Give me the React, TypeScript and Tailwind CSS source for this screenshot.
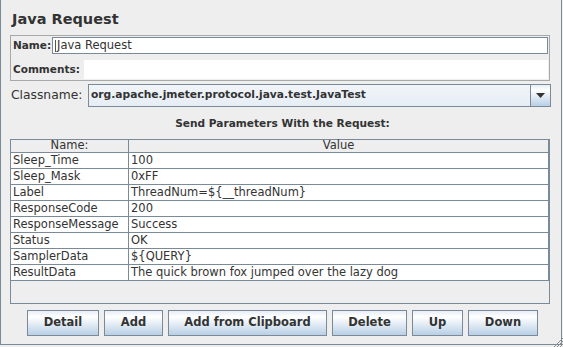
import React from 'react';

const rows: [string, string][] = [
  ['Sleep_Time', '100'],
  ['Sleep_Mask', '0xFF'],
  ['Label', 'ThreadNum=${__threadNum}'],
  ['ResponseCode', '200'],
  ['ResponseMessage', 'Success'],
  ['Status', 'OK'],
  ['SamplerData', '${QUERY}'],
  ['ResultData', 'The quick brown fox jumped over the lazy dog'],
];

const buttons: [string, string][] = [
  ['Detail', 'w-[72px]'],
  ['Add', 'w-[59px]'],
  ['Add from Clipboard', 'w-[159px]'],
  ['Delete', 'w-[75px]'],
  ['Up', 'w-[51px]'],
  ['Down', 'w-[70px]'],
];

const btnBg =
  'bg-[linear-gradient(to_bottom,#e6eef6_0%,#ffffff_25%,#b8cfe5_100%)]';

export default function App() {
  return (
    <div className="relative w-[563px] h-[347px] overflow-hidden bg-[#eeeeee] text-[#333333] font-['DejaVu_Sans',sans-serif]">
      <div className="w-[562px] h-[345px] border-x border-b border-[#7a8a99] flex flex-col pl-[9px] pr-[10px]">
        {/* Title */}
        <div className="h-[35px] pt-[9px] pl-[2px] text-[14.5px] leading-[20px] font-bold">Java Request</div>

        {/* Name / Comments */}
        <div className="w-[540px] h-[46px] border border-[#a8a8a8] flex flex-col pl-[2px] pt-[1px] pr-[1px]">
          <div className="flex items-center h-[17px]">
            <span className="w-[39px] flex-none whitespace-nowrap text-[10.5px] font-bold leading-none">Name:</span>
            <div className="flex-1 h-[17px] border border-[#7a8a99] bg-white flex items-center pl-[2px] text-[11.5px] leading-none">
              <span className="w-px h-[12px] bg-[#555] mr-[1px]" />
              Java Request
            </div>
          </div>
          <div className="flex items-stretch mt-[6px] h-[19px]">
            <span className="w-[71px] flex-none whitespace-nowrap text-[10.5px] font-bold leading-[19px]">Comments:</span>
            <div className="flex-1 bg-white" />
          </div>
        </div>

        {/* Classname */}
        <div className="flex items-center mt-[3px] h-[23px]">
          <span className="w-[78px] flex-none pl-[1px] text-[12.3px] leading-none">Classname:</span>
          <div className="flex w-[463px] h-[23px] border border-[#7a8a99]">
            <div className="flex-1 bg-[linear-gradient(to_bottom,#f1f5f9,#e6edf4)] flex items-center pl-[2px] text-[10.7px] font-bold leading-none border-r border-[#7a8a99]">
              org.apache.jmeter.protocol.java.test.JavaTest
            </div>
            <div className={`w-[19px] flex items-center justify-center ${btnBg}`}>
              <svg width="9" height="5" viewBox="0 0 9 5">
                <path d="M0 0H9L4.5 5Z" fill="#333" />
              </svg>
            </div>
          </div>
        </div>

        {/* Table title */}
        <div className="h-[32px] flex items-center justify-center text-[10.6px] font-bold leading-none pl-[4px]">
          Send Parameters With the Request:
        </div>

        {/* Table */}
        <div className="w-[540px] h-[165px] border border-[#7a8a99] flex flex-col text-[11.5px] leading-none">
          <div className="flex h-[13px] border-b border-[#7a8a99] bg-[#eeeeee]">
            <div className="w-[118px] border-r border-[#7a8a99] flex items-center justify-center">Name:</div>
            <div className="flex-1 border-r border-[#7a8a99] flex items-center justify-center">Value</div>
          </div>
          {rows.map(([n, v]) => (
            <div key={n} className="flex h-[16px] border-b border-[#7a8a99] bg-white">
              <div className="w-[118px] border-r border-[#7a8a99] flex items-center pl-[2px] whitespace-pre">{n}</div>
              <div className="flex-1 border-r border-[#7a8a99] flex items-center pl-[2px] whitespace-pre">{v}</div>
            </div>
          ))}
          <div className="flex-1" />
        </div>

        {/* Buttons */}
        <div className="flex gap-[5px] mt-[6px] pl-[17px]">
          {buttons.map(([b, w]) => (
            <div
              key={b}
              className={`${w} h-[26px] border border-[#7a8a99] ${btnBg} flex items-center justify-center text-[11.5px] font-bold leading-none`}
            >
              {b}
            </div>
          ))}
        </div>
      </div>

      {/* resize grip */}
      <svg className="absolute right-0 bottom-0" width="10" height="10" viewBox="0 0 10 10">
        <path d="M10 1L1 10M10 4L4 10M10 7L7 10" stroke="#8a8a8a" strokeWidth="1" />
      </svg>
    </div>
  );
}
